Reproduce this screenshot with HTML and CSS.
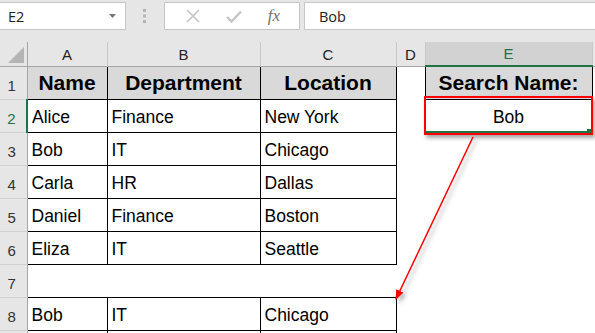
FILE: index.html
```html
<!DOCTYPE html>
<html lang="en">
<head>
    <meta charset="UTF-8">
    <title>Search Name</title>
    <link rel="stylesheet" href="styles.css">
</head>
<body>
    <div class="formula-bar">
        <div class="name-box">
            <span>E2</span>
            <svg class="caret" width="7" height="4" viewBox="0 0 7 4"><path d="M0 0H7L3.5 4Z" fill="#777"/></svg>
        </div>
        <div class="grip">
            <svg width="4" height="14" viewBox="0 0 4 14"><rect x="0" y="0" width="3" height="3" fill="#b4b4b4"/><rect x="0" y="5.5" width="3" height="3" fill="#b4b4b4"/><rect x="0" y="11" width="3" height="3" fill="#b4b4b4"/></svg>
        </div>
        <div class="fx-box">
            <svg width="14" height="14" viewBox="0 0 14 14"><path d="M1 1L13 13M13 1L1 13" stroke="#c4c4c4" stroke-width="1.6"/></svg>
            <svg width="16" height="13" viewBox="0 0 16 13"><path d="M1 7L5.5 11.5L15 1.5" stroke="#c4c4c4" stroke-width="2.4" fill="none"/></svg>
            <span class="fx">fx</span>
        </div>
        <div class="formula-input">Bob</div>
    </div>

    <table class="sheet">
        <colgroup>
            <col class="c-row"><col class="c-a"><col class="c-b"><col class="c-c"><col class="c-d"><col class="c-e"><col class="c-f">
        </colgroup>
        <tr class="col-heads">
            <th class="corner"><span class="tri"></span></th>
            <th>A</th><th>B</th><th>C</th><th>D</th><th class="sel">E</th><th></th>
        </tr>
        <tr class="row">
            <th class="rh">1</th>
            <td class="b hd">Name</td><td class="b hd">Department</td><td class="b hd">Location</td>
            <td></td><td class="b hd">Search Name:</td><td></td>
        </tr>
        <tr class="row">
            <th class="rh sel">2</th>
            <td class="b">Alice</td><td class="b">Finance</td><td class="b">New York</td>
            <td></td><td class="b active">Bob</td><td></td>
        </tr>
        <tr class="row">
            <th class="rh">3</th>
            <td class="b">Bob</td><td class="b">IT</td><td class="b">Chicago</td><td></td><td></td><td></td>
        </tr>
        <tr class="row">
            <th class="rh">4</th>
            <td class="b">Carla</td><td class="b">HR</td><td class="b">Dallas</td><td></td><td></td><td></td>
        </tr>
        <tr class="row">
            <th class="rh">5</th>
            <td class="b">Daniel</td><td class="b">Finance</td><td class="b">Boston</td><td></td><td></td><td></td>
        </tr>
        <tr class="row">
            <th class="rh">6</th>
            <td class="b">Eliza</td><td class="b">IT</td><td class="b">Seattle</td><td></td><td></td><td></td>
        </tr>
        <tr class="row">
            <th class="rh">7</th>
            <td></td><td></td><td></td><td></td><td></td><td></td>
        </tr>
        <tr class="row">
            <th class="rh">8</th>
            <td class="b">Bob</td><td class="b">IT</td><td class="b">Chicago</td><td></td><td></td><td></td>
        </tr>
        <tr class="row">
            <th class="rh"></th>
            <td class="b"></td><td class="b"></td><td class="b"></td><td></td><td></td><td></td>
        </tr>
    </table>

    <div class="callout"></div>

    <svg class="arrow" width="595" height="333" viewBox="0 0 595 333">
        <defs>
            <marker id="head" markerWidth="10" markerHeight="10" refX="9" refY="5" orient="auto" markerUnits="userSpaceOnUse">
                <path d="M0 1L10 5L0 9Z" fill="#ff0000"/>
            </marker>
        </defs>
        <line x1="473" y1="137" x2="396" y2="299" stroke="#ff0000" stroke-width="1.5" marker-end="url(#head)"/>
    </svg>
</body>
</html>
```

FILE: styles.css
```css
body {
    margin: 0;
    width: 595px;
    height: 333px;
    overflow: hidden;
    position: relative;
    background: #fff;
    font-family: "Liberation Sans", Arial, sans-serif;
}
.formula-bar {
    height: 42px;
    box-sizing: border-box;
    padding-top: 2px;
    background: #e6e6e6;
    display: flex;
    align-items: flex-start;
    font-family: "Open Sans", "Liberation Sans", sans-serif;
    font-size: 14.5px;
    color: #222;
}
.name-box {
    width: 126px;
    height: 28px;
    box-sizing: border-box;
    background: #fff;
    border: 1px solid #c6c6c6;
    border-left: none;
    padding: 0 9px 0 8px;
    display: flex;
    align-items: center;
    justify-content: space-between;
}
.grip {
    width: 38px;
    height: 28px;
    display: flex;
    align-items: center;
    justify-content: center;
}
.fx-box {
    width: 136px;
    height: 28px;
    box-sizing: border-box;
    background: #fff;
    border: 1px solid #c6c6c6;
    display: flex;
    align-items: center;
    justify-content: space-around;
    padding: 0 6px 0 8px;
}
.fx {
    font-family: "Liberation Serif", serif;
    font-style: italic;
    font-size: 17px;
    color: #707070;
}
.formula-input {
    flex: 1;
    margin-left: 4px;
    height: 28px;
    box-sizing: border-box;
    background: #fff;
    border: 1px solid #c6c6c6;
    border-right: none;
    padding-left: 14px;
    display: flex;
    align-items: center;
}
.sheet {
    border-collapse: collapse;
    table-layout: fixed;
    width: 642px;
}
.c-row { width: 27px; }
.c-a { width: 80px; }
.c-b { width: 153px; }
.c-c { width: 136px; }
.c-d { width: 29px; }
.c-e { width: 167px; }
.c-f { width: 50px; }
.sheet th, .sheet td {
    padding: 0;
    box-sizing: border-box;
    overflow: hidden;
    white-space: nowrap;
}
.col-heads {
    height: 24px;
}
.row {
    height: 33px;
}
.col-heads th {
    background: #e6e6e6;
    border-right: 1px solid #c8c8c8;
    border-bottom: 1px solid #a6a6a6;
    font-weight: normal;
    font-size: 15px;
    line-height: 18px;
    color: #222;
    text-align: center;
    vertical-align: bottom;
    padding-bottom: 2px;
}
.col-heads th.sel {
    background: #d2d2d2;
    color: #217346;
    border-bottom: 2px solid #217346;
}
.col-heads .corner {
    position: relative;
    border-right: 1px solid #a6a6a6;
}
.tri {
    position: absolute;
    right: 3px;
    bottom: 3px;
    width: 0;
    height: 0;
    border-left: 16px solid transparent;
    border-bottom: 16px solid #b4b4b4;
}
.sheet .rh {
    background: #e6e6e6;
    border-right: 1px solid #a6a6a6;
    border-bottom: 1px solid #d0d0d0;
    font-weight: normal;
    font-size: 15px;
    line-height: 18px;
    color: #333;
    text-align: center;
    vertical-align: bottom;
    padding: 0 3px 4px 0;
}
.sheet .rh.sel {
    color: #217346;
    border-right: 2px solid #217346;
}
.sheet td {
    font-size: 17.5px;
    line-height: 20px;
    color: #000;
    padding: 3px 0 0 4px;
    vertical-align: middle;
}
.sheet td.b {
    border: 1px solid #000;
}
.sheet td.hd {
    background: #d9d9d9;
    font-weight: bold;
    font-size: 21px;
    line-height: 24px;
    text-align: center;
    padding: 0;
}
.sheet td.active {
    text-align: center;
    padding-left: 0;
    border-bottom: 2px solid #217346;
}
.callout {
    position: absolute;
    left: 424px;
    top: 96px;
    width: 165px;
    height: 35px;
    border: 2px solid #ff0000;
    box-shadow: 2px 3px 4px rgba(0, 0, 0, 0.35);
}
.callout::after {
    content: "";
    position: absolute;
    right: 0;
    bottom: 0;
    width: 4px;
    height: 4px;
    background: #217346;
}
.arrow {
    position: absolute;
    left: 0;
    top: 0;
    pointer-events: none;
    filter: drop-shadow(3px 3px 2px rgba(0, 0, 0, 0.3));
}
```
